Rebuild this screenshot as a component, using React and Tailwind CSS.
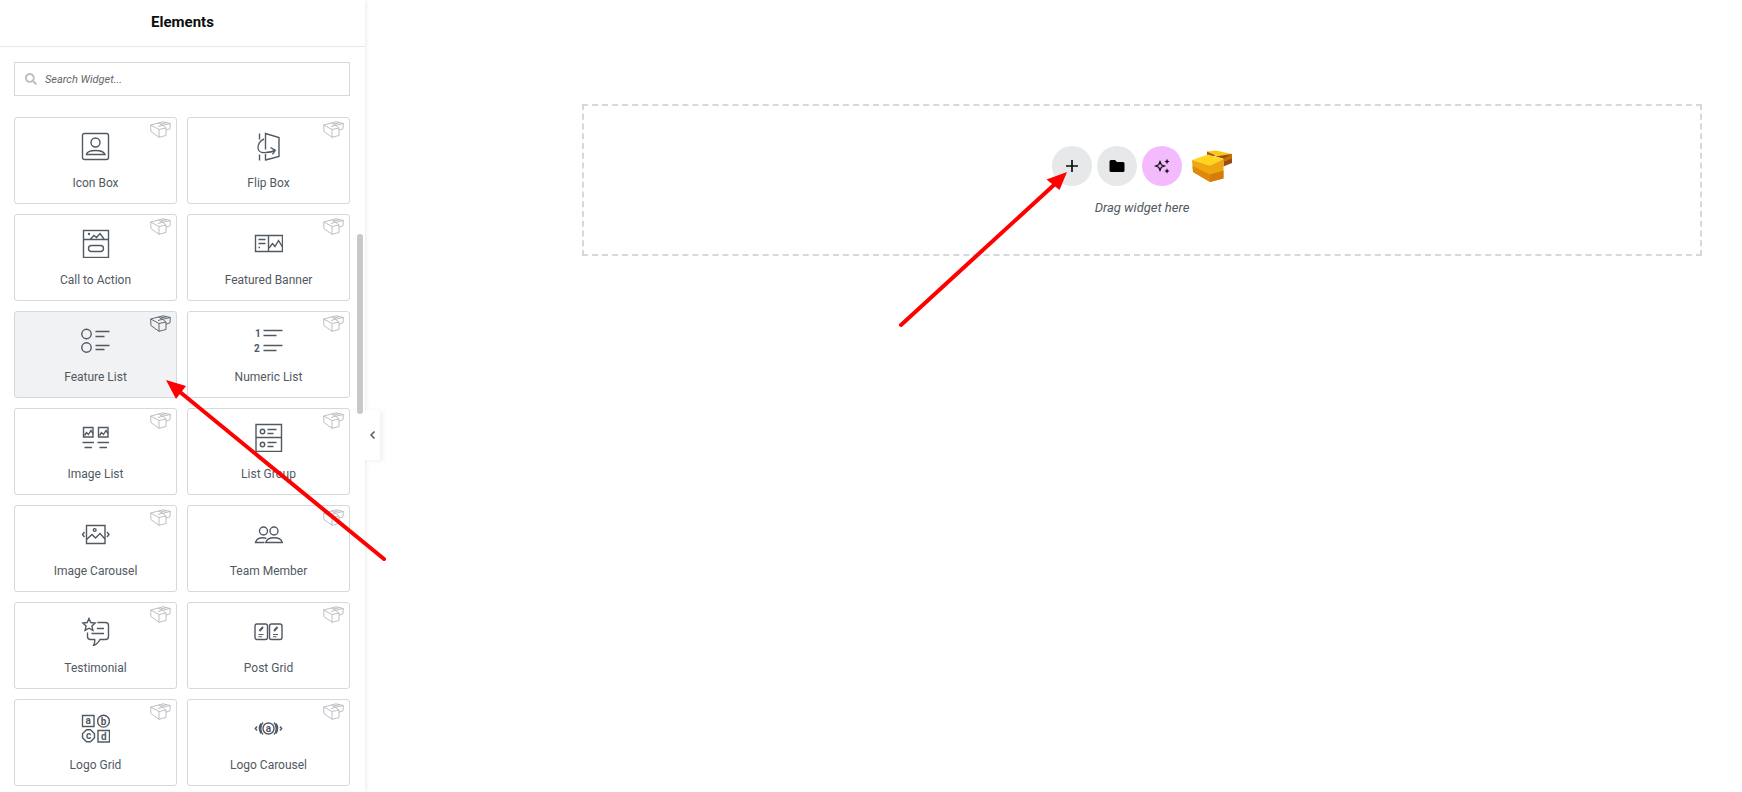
import React, { useState } from 'react';
import { FaSearch } from 'react-icons/fa';

const icons = {
  iconBox: (
    <>
      <rect x="1.5" y="1.5" width="26" height="26" rx="2" />
      <circle cx="14.5" cy="10.5" r="4.5" />
      <path d="M5.5 22.5c.5-2.600 4.500-4 9-4s8.500 1.400 9.500 4z" />
    </>
  ),
  flipBox: (
    <>
      <path d="M5.500 1.500v6M5.500 22.500v6M11.500 22v6.500" />
      <path d="M11.500 17.500v-16l13.500 4v19l-13.500 3.500" />
      <path d="M10 7C6 8.500 3.500 12.500 4 16.500c.5 3 4 4.500 8 4 4-.2 6.500-.8 9-2M16.500 15.500l4.800 2.800-2.800 4" />
    </>
  ),
  callToAction: (
    <>
      <rect x="2.500" y="1.500" width="25" height="27" />
      <path d="M2.500 10.500h25M9.500 10l3.500-3.500 2.500 2L19 4.500l4 5.500" />
      <circle cx="8" cy="5" r=".5" />
      <rect x="7.500" y="16.500" width="15" height="6" rx="3" />
    </>
  ),
  featuredBanner: (
    <>
      <path d="M1.500 6.500h27v16h-27zM14.500 6.500v16M4.500 10.500h7M4.500 14.500h7M4.500 18.500h1.500" />
      <path d="M15 19l3.500-4.500 2.500 3 3.500-6 4 6.500" />
    </>
  ),
  featureList: (
    <>
      <circle cx="5.500" cy="8" r="4.700" />
      <circle cx="5.500" cy="21.500" r="4.700" />
      <path d="M14.500 5.500h14M14.500 10.500h9M14.500 19.500h14M14.500 23.500h9" />
    </>
  ),
  numericList: (
    <>
      <path d="M9.500 4.500h19M9.500 9.500h13M9.500 19.500h19M9.500 24.500h13" />
      <text x="1" y="11" className="fill-current stroke-none text-[10px] font-bold">1</text>
      <text x="0" y="26" className="fill-current stroke-none text-[10px] font-bold">2</text>
    </>
  ),
  imageList: (
    <>
      <path d="M2.500 4.500h9.500v9.500h-9.500zM17.500 4.500h9.500v9.500h-9.500z" />
      <path d="M3.500 12.500l2-3 2 2 2.500-4 2 3M18.500 12.500l2-3 2 2 2.500-4 2 3" />
      <path d="M1.500 19.500h11.500M16.500 19.500h11.500M3.500 24.500h7.500M18.500 24.500h7.500" />
    </>
  ),
  listGroup: (
    <>
      <path d="M2 1.500h25.500v27h-25.500zM2 14.500h25.500" />
      <circle cx="8.500" cy="8.500" r="2.200" />
      <circle cx="8.500" cy="21.500" r="2.200" />
      <path d="M13.500 6.500h9M13.500 10.500h6M13.500 19.500h9M13.500 23.500h6" />
    </>
  ),
  imageCarousel: (
    <>
      <path d="M5.500 5.500h18.500v18h-18.500z" />
      <circle cx="13.700" cy="10" r="1.400" />
      <path d="M5.500 19.500l5.500-5 3.500 3.500 4.500-4.500 5 5.500M3.500 12l-2 2.500 2 2.500M26 12l2 2.500-2 2.500" />
    </>
  ),
  teamMember: (
    <>
      <circle cx="9.500" cy="11" r="4" />
      <circle cx="20" cy="11" r="4" />
      <path d="M10.500 22.500h-9c.8-3 4-4.700 7.500-4.700 1.200 0 2.300.2 3.300.6M11.800 22.500c.8-3 4.200-4.700 8.200-4.700s7.500 1.700 8.300 4.700z" />
    </>
  ),
  testimonial: (
    <>
      <path d="M8 1.500l1.800 4 4.400.5-3.300 3 1 4.400L8 11.200l-3.900 2.200 1-4.400L1.800 6l4.400-.5z" />
      <path d="M16.500 5.500h8a3 3 0 0 1 3 3v11a3 3 0 0 1-3 3h-5.500c-1.500 3-3.500 5-6.500 6 1-2 1.500-4 1.200-6h-4.200a3 3 0 0 1-3-3v-4" />
      <path d="M16 11.500h7M10.500 16.500h12.500" />
    </>
  ),
  postGrid: (
    <>
      <rect x="1" y="7" width="12.500" height="15.500" rx="2" />
      <rect x="15.500" y="7" width="12.500" height="15.500" rx="2" />
      <path d="M4.500 17.500h5M4.500 19.700h3.500M19 17.500h5M19 19.700h3.500" strokeWidth="1.100" />
      <path d="M5.500 14l3.500-4M20 14l3.500-4" strokeWidth="2" />
    </>
  ),
  logoGrid: (
    <>
      <path d="M1.500 1.500h11.500v11h-11.500zM17 16.500h11.500v11.500h-11.500z" />
      <circle cx="22.500" cy="7.200" r="5.900" />
      <path d="M5.500 15.700h4l4 4v4l-4 4h-4l-4-4v-4z" strokeLinejoin="round" />
      <g className="fill-current stroke-none text-[10px] font-bold" textAnchor="middle">
        <text x="7.300" y="10">a</text>
        <text x="22.500" y="11">b</text>
        <text x="7.500" y="25">c</text>
        <text x="22.800" y="26">d</text>
      </g>
    </>
  ),
  logoCarousel: (
    <>
      <circle cx="14.500" cy="14.500" r="5.500" />
      <path d="M9 8.500c-3 3-3 9 0 12M20 8.500c3 3 3 9 0 12M7 9.500c-2 3-2 7 0 10M22 9.500c2 3 2 7 0 10" />
      <path d="M3 12.500l-1.700 2L3 16.500M26 12.500l1.700 2-1.700 2" />
      <text x="14.500" y="17.500" textAnchor="middle" className="fill-current stroke-none text-[10px] font-bold">a</text>
    </>
  ),
};

const widgets = [
  { icon: 'iconBox', title: 'Icon Box' },
  { icon: 'flipBox', title: 'Flip Box' },
  { icon: 'callToAction', title: 'Call to Action' },
  { icon: 'featuredBanner', title: 'Featured Banner' },
  { icon: 'featureList', title: 'Feature List', active: true },
  { icon: 'numericList', title: 'Numeric List' },
  { icon: 'imageList', title: 'Image List' },
  { icon: 'listGroup', title: 'List Group' },
  { icon: 'imageCarousel', title: 'Image Carousel' },
  { icon: 'teamMember', title: 'Team Member' },
  { icon: 'testimonial', title: 'Testimonial' },
  { icon: 'postGrid', title: 'Post Grid' },
  { icon: 'logoGrid', title: 'Logo Grid' },
  { icon: 'logoCarousel', title: 'Logo Carousel' },
];

const BrickMark = ({ active }) => (
  <svg
    viewBox="0 0 21 17"
    className={`absolute top-[3px] right-[5px] w-[21px] h-[17px] ${active ? 'text-[#515962]' : 'text-[#b4b8bd]'}`}
    fill="none"
    stroke="currentColor"
    strokeWidth="0.9"
    strokeLinejoin="round"
  >
    <path d="M.7 4l.2 6.500L9 16.300V8.500zM9 8.500L16 7v7.500l-7 1.800M.7 4l7.800-2 4 2.200L16 7" />
    <path d="M8.500 2l4.500-1.200 7.300 1.700L20 7.800l-4 1.400M20.300 2.500l-7.800 1.800M8 5.500l4.500-1.200M10.500 3l6-1.300" />
  </svg>
);

const WidgetCard = ({ icon, title, active }) => (
  <button
    type="button"
    className={`relative flex flex-col items-center h-[87px] pt-[14px] rounded-[3px] border border-[#d5d8dc] text-[#515962] ${active ? 'bg-[#f1f2f3]' : 'bg-white'}`}
  >
    <BrickMark active={active} />
    <svg viewBox="0 0 29 29" className="w-[29px] h-[29px]" fill="none" stroke="currentColor" strokeWidth="1.4">
      {icons[icon]}
    </svg>
    <span className="mt-[14px] text-xs leading-4">{title}</span>
  </button>
);

const Sidebar = () => {
  const [search, setSearch] = useState('');

  return (
    <aside className="relative w-[365px] shrink-0 bg-white shadow-[0_0_5px_rgba(0,0,0,0.12)]">
      <header className="h-[47px] border-b border-[#e6e8ea] flex items-center justify-center pb-[2px]">
        <h1 className="text-[15px] leading-5 font-bold text-[#0c0d0e]">Elements</h1>
      </header>

      <div className="h-[calc(100vh-47px)] overflow-hidden pt-[15px] pl-[14px] pr-[15px]">
        <div className="flex items-center h-[34px] border border-[#d5d8dc] pl-[10px]">
          <FaSearch className="w-[12px] h-[12px] text-[#babfc5]" />
          <input
            type="text"
            aria-label="Search Widget"
            value={search}
            onChange={(e) => setSearch(e.target.value)}
            placeholder="Search Widget..."
            className="flex-1 min-w-0 h-8 pl-2 pt-px text-[11px] leading-5 italic outline-none placeholder:text-[#666]"
          />
        </div>
        <div className="mt-[21px] grid grid-cols-2 gap-[10px]">
          {widgets.map((w) => (
            <WidgetCard key={w.icon} {...w} />
          ))}
        </div>
      </div>

      {/* Scroll thumb */}
      <div className="absolute right-[2px] top-[234px] w-[6px] h-[180px] rounded-full bg-[#c8c8c8]" />

      {/* Collapse handle */}
      <button
        type="button"
        aria-label="Hide panel"
        className="absolute left-full top-[410px] w-[15px] h-[50px] bg-white flex items-center justify-center shadow-[3px_1px_5px_rgba(0,0,0,0.06)]"
      >
        <svg viewBox="0 0 6 8" className="w-[6px] h-[8px]" fill="none" stroke="#515962" strokeWidth="1.5">
          <path d="M4.500 .5L1 4l3.500 3.500" />
        </svg>
      </button>
    </aside>
  );
};

const Bricks = () => (
  <svg viewBox="0 0 42 34" className="w-[42px] h-[34px]">
    {/* back brick */}
    <path d="M16 2.500l9-1 16 3.500-9 4.500-7-3z" fill="#fbc915" />
    <path d="M16 2.500l9 4-6 1.500-3-2z" fill="#a8560e" />
    <path d="M24 7.500l17-2.500v9l-8.500 3.500V9.500z" fill="#9c4c0c" />
    <path d="M32.500 9.500L41 5v4.500l-8.500 3.500z" fill="#c4700f" />
    {/* front brick */}
    <path d="M1 11l16-5.500 8.500 2.500 7 2L19 16.500z" fill="#ffd61c" />
    <path d="M1 11l18 5.500V33L2 23z" fill="#f0a70d" />
    <path d="M1.500 17L19 25.500V33L2 23z" fill="#dd8a0b" />
    <path d="M19 16.500L32.500 10v19.500L19 33z" fill="#eda60e" />
    <path d="M19 25.500l13.500-4v8L19 33z" fill="#d47d0b" />
  </svg>
);

const DropZone = () => (
  <section className="ml-[217px] mr-10 mt-[104px] h-[152px] border-2 border-dashed border-[#d5d8dc] flex flex-col items-center pt-10">
    <div className="flex items-center gap-[5px]">
      <button type="button" aria-label="Add new container" className="w-10 h-10 rounded-full bg-[#e6e8ea] flex items-center justify-center">
        <svg viewBox="0 0 12 12" className="w-3 h-3" stroke="#0c0d0e" strokeWidth="1.7">
          <path d="M6 0v12M0 6h12" />
        </svg>
      </button>
      <button type="button" aria-label="Add template" className="w-10 h-10 rounded-full bg-[#e6e8ea] flex items-center justify-center">
        <svg viewBox="0 0 16 14" className="w-4 h-[14px]" fill="#000">
          <path d="M2 1h4l2 2h6a1.500 1.500 0 0 1 1.500 1.500v7A1.500 1.500 0 0 1 14 13H2A1.500 1.500 0 0 1 .5 11.500v-9A1.500 1.500 0 0 1 2 1z" />
        </svg>
      </button>
      <button type="button" aria-label="Build with AI" className="w-10 h-10 rounded-full bg-[#f3bafd] flex items-center justify-center">
        <svg viewBox="0 0 16 16" className="w-4 h-4" fill="#0c0d0e">
          <path d="M6 3.500l1.300 3.200L10.500 8 7.300 9.300 6 12.500 4.700 9.300 1.500 8l3.200-1.300z" fill="none" stroke="#0c0d0e" strokeWidth="1.200" />
          <path d="M13 .8l.8 1.900 1.900.8-1.900.8-.8 1.900-.8-1.900-1.900-.8 1.900-.8zM13 10.300l.8 1.900 1.900.8-1.900.8-.8 1.900-.8-1.900-1.900-.8 1.900-.8z" />
        </svg>
      </button>
      <button type="button" aria-label="Add block" className="ml-1 w-[42px] h-10 flex items-center justify-center">
        <Bricks />
      </button>
    </div>
    <p className="mt-[14px] text-[13px] leading-4 italic text-[#515962]">Drag widget here</p>
  </section>
);

// Red pointers drawn over the editor
const Pointers = () => (
  <svg viewBox="0 0 1100 580" className="absolute left-0 top-0 w-[1100px] h-[580px] pointer-events-none" fill="#f00" stroke="#f00">
    <path d="M901 325L1055 184M384 559L180 392" strokeWidth="4" strokeLinecap="round" />
    <path d="M1067 172l-20.500 7.500L1059.500 190zM166 380l20 6-10 13z" stroke="none" />
  </svg>
);

export default function App() {
  return (
    <div className="relative flex min-h-screen overflow-hidden bg-white font-[Roboto,sans-serif]">
      <Sidebar />
      <main className="flex-1 min-w-0">
        <DropZone />
      </main>
      <Pointers />
    </div>
  );
}
